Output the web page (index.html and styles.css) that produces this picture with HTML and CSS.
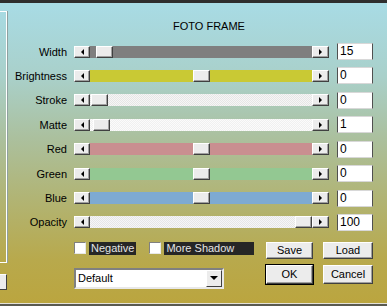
FILE: index.html
```html
<!DOCTYPE html>
<html lang="en">
<head>
  <meta charset="UTF-8">
  <title>Foto Frame</title>
  <link rel="stylesheet" href="styles.css">
</head>
<body>
  <div class="topbar"></div>

  <div class="window">
    <!-- left preview, mostly cut off -->
    <div class="side">
      <div class="preview"></div>
      <div class="side-btn"></div>
    </div>

    <div class="main">
      <div class="title">FOTO FRAME</div>

      <div class="rows">
        <div class="row">
          <label class="label">Width</label>
          <div class="scroll">
            <span class="arrow arrow-left"></span>
            <span class="track track-gray"><span class="thumb" style="margin-left: 6px"></span></span>
            <span class="arrow arrow-right"></span>
          </div>
          <span class="edit">15</span>
        </div>
        <div class="row">
          <label class="label">Brightness</label>
          <div class="scroll">
            <span class="arrow arrow-left"></span>
            <span class="track track-yellow"><span class="thumb" style="margin-left: 103px"></span></span>
            <span class="arrow arrow-right"></span>
          </div>
          <span class="edit">0</span>
        </div>
        <div class="row">
          <label class="label">Stroke</label>
          <div class="scroll">
            <span class="arrow arrow-left"></span>
            <span class="track track-light"><span class="thumb" style="margin-left: 1px"></span></span>
            <span class="arrow arrow-right"></span>
          </div>
          <span class="edit">0</span>
        </div>
        <div class="row">
          <label class="label">Matte</label>
          <div class="scroll">
            <span class="arrow arrow-left"></span>
            <span class="track track-white"><span class="thumb" style="margin-left: 3px"></span></span>
            <span class="arrow arrow-right"></span>
          </div>
          <span class="edit">1</span>
        </div>
        <div class="row">
          <label class="label">Red</label>
          <div class="scroll">
            <span class="arrow arrow-left"></span>
            <span class="track track-red"><span class="thumb" style="margin-left: 103px"></span></span>
            <span class="arrow arrow-right"></span>
          </div>
          <span class="edit">0</span>
        </div>
        <div class="row">
          <label class="label">Green</label>
          <div class="scroll">
            <span class="arrow arrow-left"></span>
            <span class="track track-green"><span class="thumb" style="margin-left: 103px"></span></span>
            <span class="arrow arrow-right"></span>
          </div>
          <span class="edit">0</span>
        </div>
        <div class="row">
          <label class="label">Blue</label>
          <div class="scroll">
            <span class="arrow arrow-left"></span>
            <span class="track track-blue"><span class="thumb" style="margin-left: 103px"></span></span>
            <span class="arrow arrow-right"></span>
          </div>
          <span class="edit">0</span>
        </div>
        <div class="row">
          <label class="label">Opacity</label>
          <div class="scroll">
            <span class="arrow arrow-left"></span>
            <span class="track track-light"><span class="thumb" style="margin-left: 205px"></span></span>
            <span class="arrow arrow-right"></span>
          </div>
          <span class="edit">100</span>
        </div>
      </div>

      <div class="bottom">
        <div class="opts">
          <div class="checks">
            <span class="check"><span class="box"></span><span class="check-text">Negative</span></span>
            <span class="check"><span class="box"></span><span class="check-text">More Shadow</span></span>
          </div>
          <div class="combo">
            <span class="combo-text">Default</span>
            <span class="combo-btn"></span>
          </div>
        </div>
        <div class="btns">
          <button class="btn">Save</button>
          <button class="btn">Load</button>
          <button class="btn btn-default">OK</button>
          <button class="btn">Cancel</button>
        </div>
      </div>
    </div>
  </div>

  <div class="footer"></div>
</body>
</html>
```

FILE: styles.css
```css
* {
  box-sizing: border-box;
}

body {
  margin: 0;
  width: 387px;
  height: 306px;
  overflow: hidden;
  display: flex;
  flex-direction: column;
  font-family: 'Liberation Sans', Arial, sans-serif;
  font-size: 11px;
  color: #000;
  background: linear-gradient(to bottom, #a8dce6 0%, #a9d0ca 25%, #abc09e 45%, #b1b474 65%, #b8a94c 85%, #bba53e 100%);
}

.topbar {
  height: 3px;
  background: #2e2e2e;
  flex-shrink: 0;
}

.window {
  flex: 1;
  display: flex;
}

/* left preview panel, cut off by the window */
.side {
  width: 7px;
  flex-shrink: 0;
  display: flex;
  flex-direction: column;
}

.preview {
  margin-top: 8px;
  height: 252px;
  border: 1px solid #fff;
  border-left: none;
  box-shadow: 1px 0 0 #8fa0a0;
}

.side-btn {
  margin-top: 11px;
  height: 16px;
  background: #ececec;
  border-right: 1px solid #404040;
  border-bottom: 1px solid #404040;
  border-top: 1px solid #fff;
}

.main {
  flex: 1;
}

.title {
  margin-top: 17px;
  padding-left: 166px;
  line-height: 13px;
  font-size: 11px;
}

.rows {
  margin-top: 10px;
  display: flex;
  flex-direction: column;
  gap: 7.43px;
}

.row {
  display: flex;
  align-items: center;
  height: 17px;
}

.label {
  width: 61px;
  padding-right: 1px;
  margin-right: 6px;
  text-align: right;
  white-space: nowrap;
}

.scroll {
  display: flex;
  width: 255px;
  height: 12px;
  margin-right: 8px;
}

.arrow {
  width: 16px;
  height: 12px;
  flex-shrink: 0;
  display: flex;
  align-items: center;
  justify-content: center;
  background: #ececec;
  border: 1px solid;
  border-color: #fff #404040 #404040 #fff;
  box-shadow: inset -1px -1px 0 #a0a0a0;
}

.arrow-right {
  width: 17px;
}

.arrow::before {
  content: "";
  width: 0;
  height: 0;
  border-top: 3px solid transparent;
  border-bottom: 3px solid transparent;
}

.arrow-left::before {
  border-right: 3px solid #000;
}

.arrow-right::before {
  border-left: 3px solid #000;
}

.track {
  flex: 1;
  display: flex;
}

.track-gray { background: #7f7f7f; }
.track-yellow { background: #c9c934; }
.track-red { background: #c98f90; }
.track-green { background: #93c892; }
.track-blue { background: #7eaad2; }
.track-white { background: repeating-conic-gradient(#fbfbfb 0 25%, #f0f0f0 0 50%) 0 0 / 2px 2px; }
.track-light { background: repeating-conic-gradient(#f6f6f6 0 25%, #e6e6e6 0 50%) 0 0 / 2px 2px; }

.thumb {
  width: 17px;
  height: 12px;
  background: #ececec;
  border: 1px solid;
  border-color: #fff #404040 #404040 #fff;
  box-shadow: inset -1px -1px 0 #a0a0a0;
}

.edit {
  width: 36px;
  height: 17px;
  padding-left: 2px;
  background: #fff;
  border: 1px solid;
  border-color: #d8d8d8 #505050 #d8d8d8 #505050;
  font-size: 12px;
  line-height: 15px;
}

.bottom {
  margin-top: 11px;
  padding-left: 67px;
  display: flex;
}

.opts {
  width: 192px;
  display: flex;
  flex-direction: column;
  gap: 13px;
}

.checks {
  display: flex;
  gap: 13px;
  height: 13px;
}

.check {
  display: flex;
  align-items: center;
  gap: 3px;
}

.box {
  width: 12px;
  height: 12px;
  background: #fff;
  border: 1px solid;
  border-color: #808080 #e8e8e8 #e8e8e8 #808080;
}

.check-text {
  background: #262626;
  color: #e4e4e4;
  height: 13px;
  line-height: 13px;
  padding: 0 2px;
}

.check + .check .check-text {
  width: 90px;
}

.combo {
  width: 150px;
  height: 21px;
  display: flex;
  align-items: center;
  justify-content: space-between;
  background: #fff;
  border: 2px solid;
  border-color: #808080 #e8e8e8 #e8e8e8 #808080;
  padding-right: 0;
}

.combo-text {
  padding-left: 2px;
  font-size: 11px;
}

.combo-btn {
  width: 16px;
  height: 17px;
  display: flex;
  align-items: center;
  justify-content: center;
  background: #ececec;
  border: 1px solid;
  border-color: #fff #404040 #404040 #fff;
}

.combo-btn::before {
  content: "";
  border-left: 4px solid transparent;
  border-right: 4px solid transparent;
  border-top: 4px solid #000;
}

.btns {
  display: grid;
  grid-template-columns: 47px 50px;
  grid-template-rows: 17px 19px;
  column-gap: 10px;
  row-gap: 6px;
}

.btn {
  margin: 0;
  padding: 0;
  font-family: inherit;
  font-size: 11px;
  color: #000;
  background: #ececec;
  border: 1px solid;
  border-color: #fff #404040 #404040 #fff;
  box-shadow: inset -1px -1px 0 #a0a0a0;
}

.btn-default {
  outline: 1px solid #000;
}

.footer {
  height: 3px;
  flex-shrink: 0;
  border-top: 1px solid #e4e2d8;
  background: #5a5a50;
}
```
